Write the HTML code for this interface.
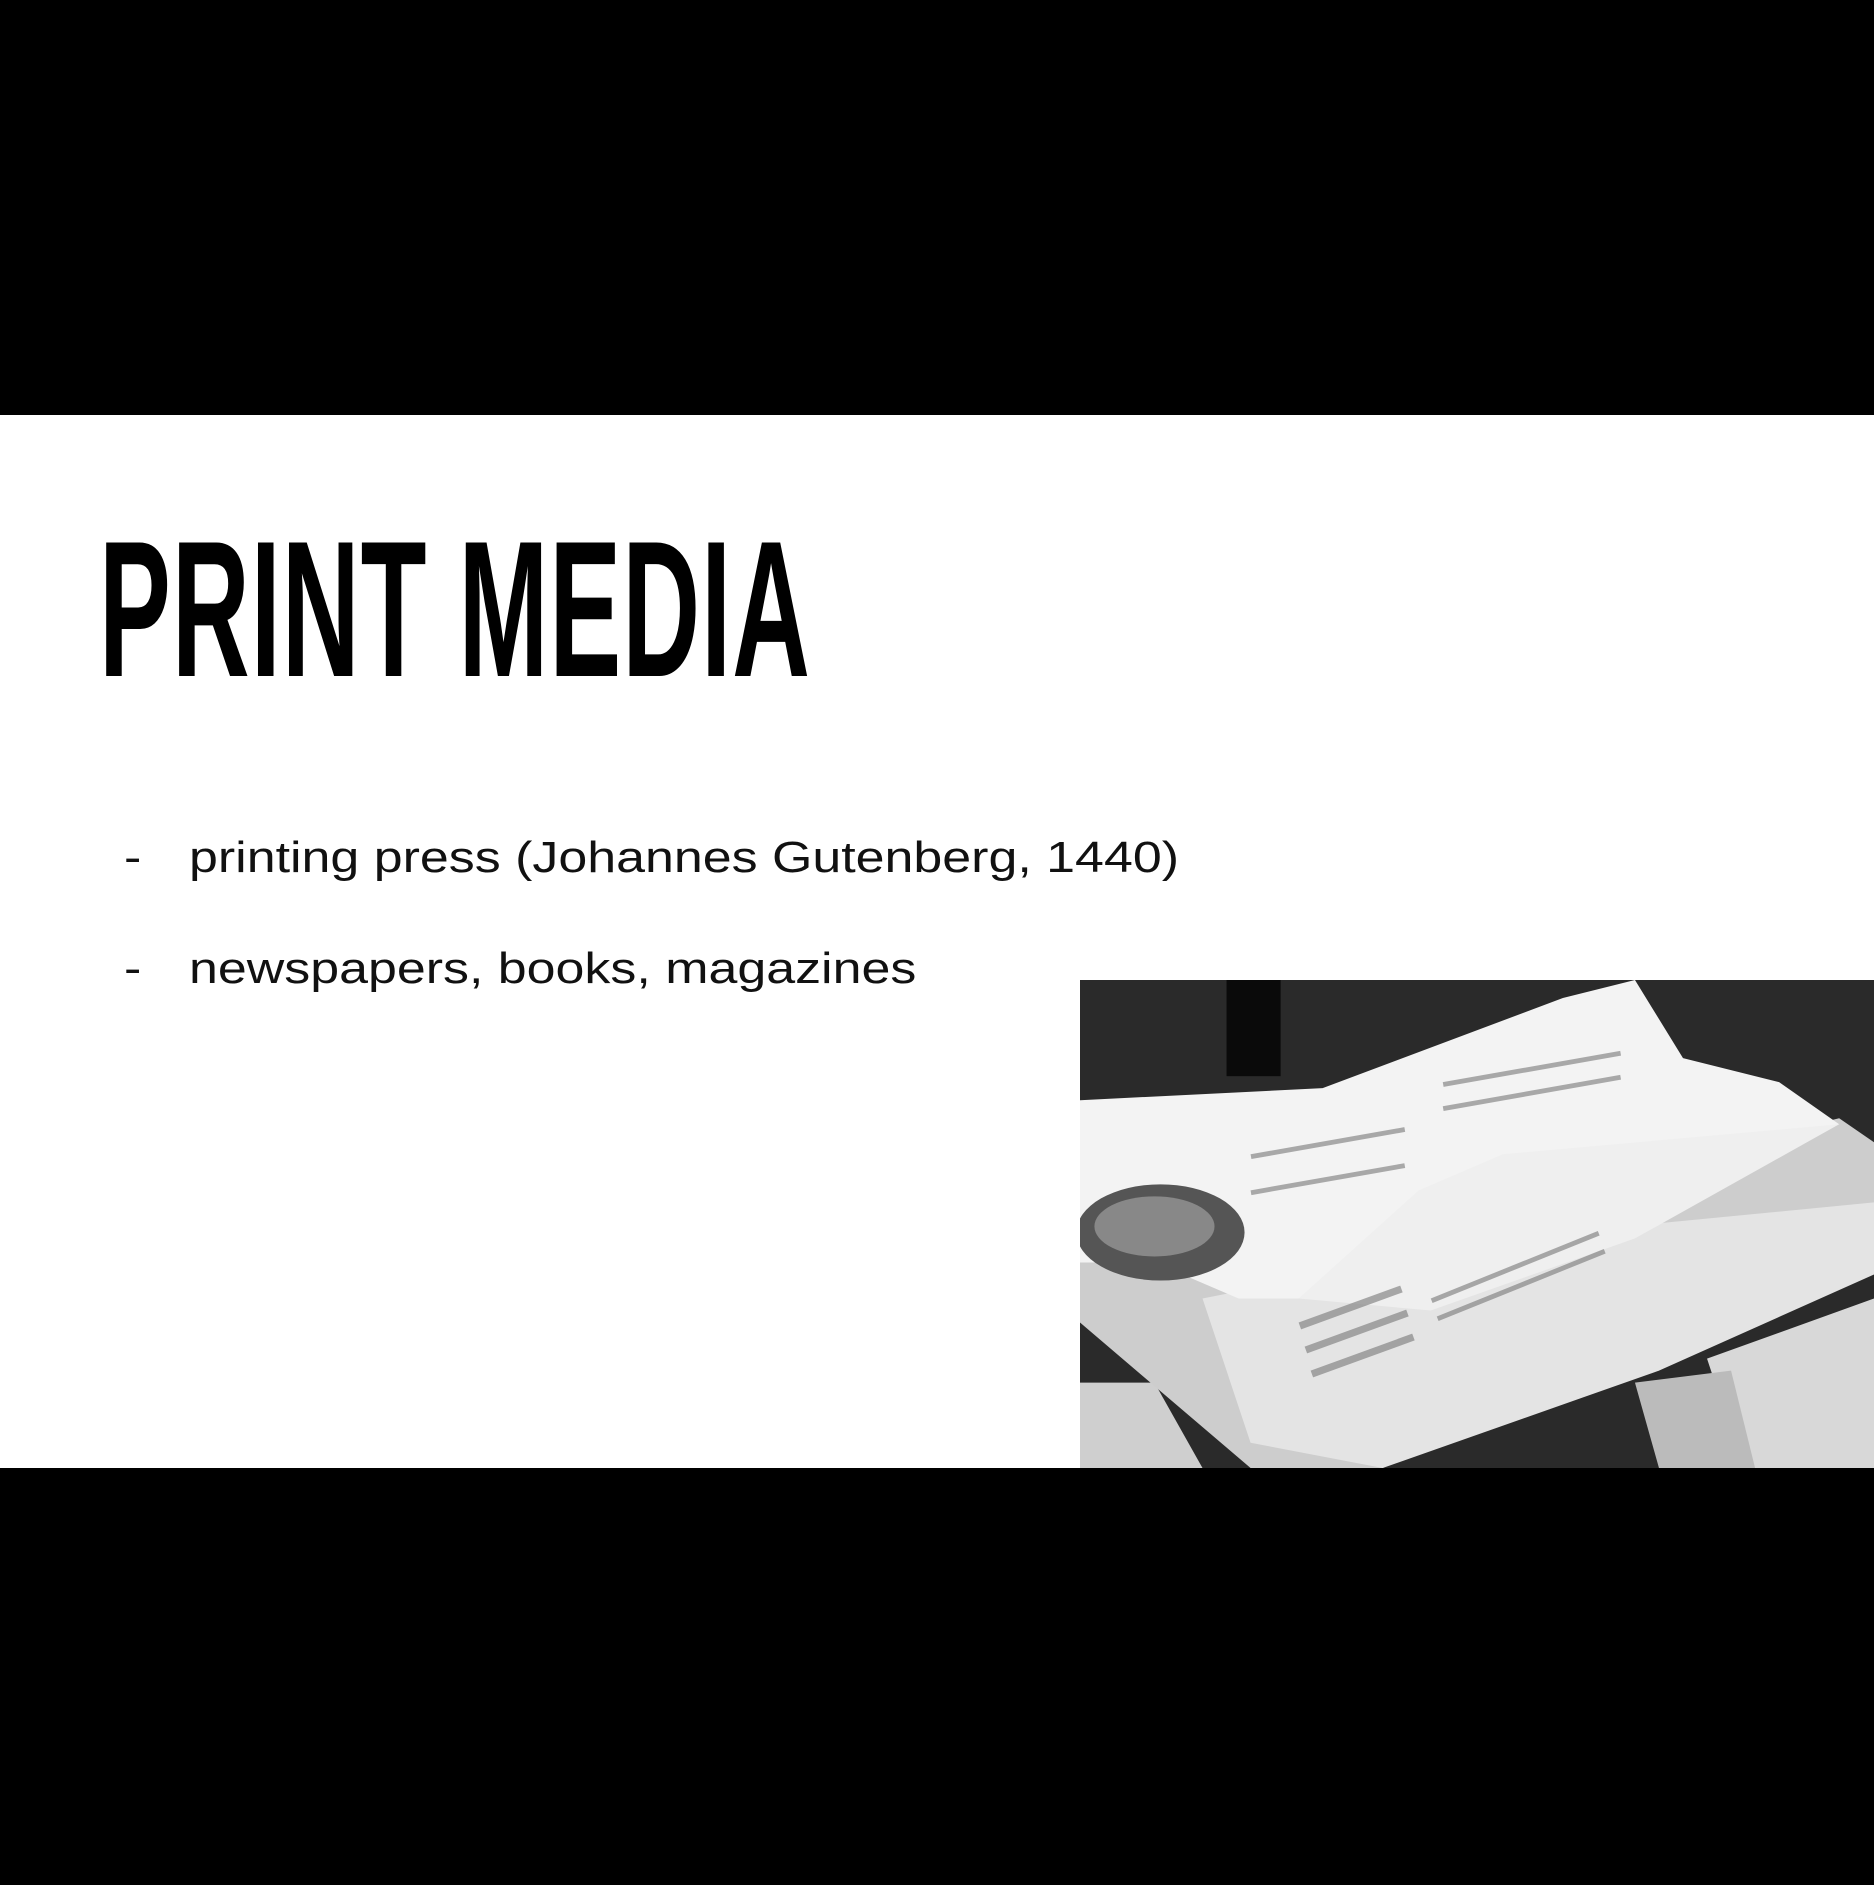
<!DOCTYPE html>
<html><head><meta charset="utf-8"><style>
html,body{margin:0;padding:0;width:1874px;height:1885px;background:#000;overflow:hidden}
.white{position:absolute;left:0;top:415px;width:1874px;height:1053px;background:#fff}
.title{position:absolute;left:99px;top:510px;font-family:"Liberation Sans",sans-serif;font-weight:bold;font-size:194px;line-height:200px;color:#000;transform:scaleX(0.555);transform-origin:0 0;white-space:nowrap;letter-spacing:2px}
.b{position:absolute;font-family:"Liberation Sans",sans-serif;font-size:44px;color:#111;white-space:nowrap;transform:scaleX(1.18);transform-origin:0 0}
svg{position:absolute;left:1080px;top:980px}
</style></head><body>
<div class="white"></div>
<div class="title">PRINT MEDIA</div>
<div class="b" style="left:124px;top:833px">-</div>
<div class="b" style="left:189px;top:833px">printing press (Johannes Gutenberg, 1440)</div>
<div class="b" style="left:124px;top:944px">-</div>
<div class="b" style="left:189px;top:944px">newspapers, books, magazines</div>
<svg width="794" height="488" viewBox="898 815 661 406" preserveAspectRatio="none">
<rect x="898" y="815" width="661" height="406" fill="#2a2a2a"/>
<rect x="1020" y="815" width="45" height="80" fill="#0a0a0a"/>
<polygon points="898,1150 898,1221 1000,1221 960,1150" fill="#cfcfcf"/>
<polygon points="1420,1130 1559,1080 1559,1221 1450,1221" fill="#d8d8d8"/>
<polygon points="1360,1150 1440,1140 1460,1221 1380,1221" fill="#bbb"/>
<polygon points="898,1000 1200,1010 1530,930 1559,950 1559,1040 1360,1120 1150,1221 1040,1221 898,1100" fill="#cdcdcd"/>
<polygon points="1000,1080 1250,1030 1559,1000 1559,1060 1380,1140 1150,1221 1040,1200" fill="#e4e4e4"/>
<polygon points="1110,1000 1440,895 1530,935 1360,1030 1190,1090 1080,1080" fill="#efefef"/>
<polygon points="898,915 1100,905 1300,830 1360,815 1400,880 1480,900 1530,935 1250,960 1180,990 1080,1080 1030,1080 960,1050 898,1050" fill="#f3f3f3"/>
<ellipse cx="965" cy="1025" rx="70" ry="40" fill="#555"/>
<ellipse cx="960" cy="1020" rx="50" ry="25" fill="#888"/>
<g fill="#777" opacity="0.6">
<rect x="1080" y="1100" width="90" height="6" transform="rotate(-20 1080 1100)"/>
<rect x="1085" y="1120" width="90" height="6" transform="rotate(-20 1085 1120)"/>
<rect x="1090" y="1140" width="90" height="6" transform="rotate(-20 1090 1140)"/>
<rect x="1190" y="1080" width="150" height="4" transform="rotate(-22 1190 1080)"/>
<rect x="1195" y="1095" width="150" height="4" transform="rotate(-22 1195 1095)"/>
<rect x="1040" y="960" width="130" height="4" transform="rotate(-10 1040 960)"/>
<rect x="1040" y="990" width="130" height="4" transform="rotate(-10 1040 990)"/>
<rect x="1200" y="900" width="150" height="4" transform="rotate(-10 1200 900)"/>
<rect x="1200" y="920" width="150" height="4" transform="rotate(-10 1200 920)"/>
</g>
</svg>
</body></html>
